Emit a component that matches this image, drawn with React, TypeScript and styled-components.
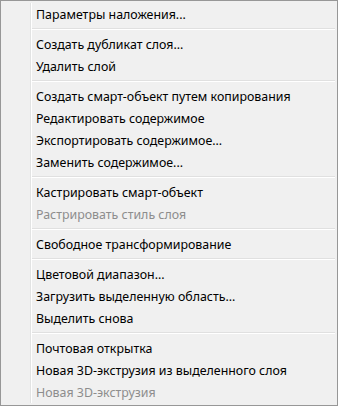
import React, { ReactElement } from "react";
import styled, { createGlobalStyle } from "styled-components";

type Entry = { label: string; disabled?: boolean } | "sep";

const entries: Entry[] = [
  { label: "Параметры наложения..." },
  "sep",
  { label: "Создать дубликат слоя..." },
  { label: "Удалить слой" },
  "sep",
  { label: "Создать смарт-объект путем копирования" },
  { label: "Редактировать содержимое" },
  { label: "Экспортировать содержимое..." },
  { label: "Заменить содержимое..." },
  "sep",
  { label: "Кастрировать смарт-объект" },
  { label: "Растрировать стиль слоя", disabled: true },
  "sep",
  { label: "Свободное трансформирование" },
  "sep",
  { label: "Цветовой диапазон..." },
  { label: "Загрузить выделенную область..." },
  { label: "Выделить снова" },
  "sep",
  { label: "Почтовая открытка" },
  { label: "Новая 3D-экструзия из выделенного слоя" },
  { label: "Новая 3D-экструзия", disabled: true },
];

export default function App(): ReactElement {
  return (
    <>
      <GlobalStyle />
      <Menu>
        <Gutter />
        {entries.map((e, i) =>
          e === "sep" ? (
            <Separator key={i} />
          ) : (
            <Item key={i} $disabled={e.disabled}>
              {e.label}
            </Item>
          )
        )}
      </Menu>
    </>
  );
}

const GlobalStyle = createGlobalStyle`
  html, body {
    margin: 0;
    padding: 0;
    background: #ffffff;
  }
`;

const Menu = styled.div`
  position: relative;
  box-sizing: border-box;
  width: 338px;
  height: 406px;
  border: 1px solid #979797;
  padding: 2px;
  background-color: #f0f0f0;
  display: flex;
  flex-direction: column;
  font-family: "Noto Sans", "Open Sans", sans-serif;
  font-size: 12.4px;
`;

// vertical line beside the icon column
const Gutter = styled.div`
  position: absolute;
  top: 2px;
  bottom: 2px;
  left: 29px;
  width: 1px;
  background-color: #e2e3e3;
  border-right: 1px solid #ffffff;
`;

const Item = styled.div<{ $disabled?: boolean }>`
  height: 22px;
  display: flex;
  align-items: center;
  padding-left: 33px;
  color: ${(p) => (p.$disabled ? "#8d8d8d" : "#000000")};
  white-space: nowrap;
`;

const Separator = styled.div`
  height: 8px;
  display: flex;
  flex-direction: column;
  justify-content: center;
  margin-left: 28px;

  &::before {
    content: "";
    height: 1px;
    background-color: #e0e0e0;
  }
  &::after {
    content: "";
    height: 1px;
    background-color: #ffffff;
  }
`;
